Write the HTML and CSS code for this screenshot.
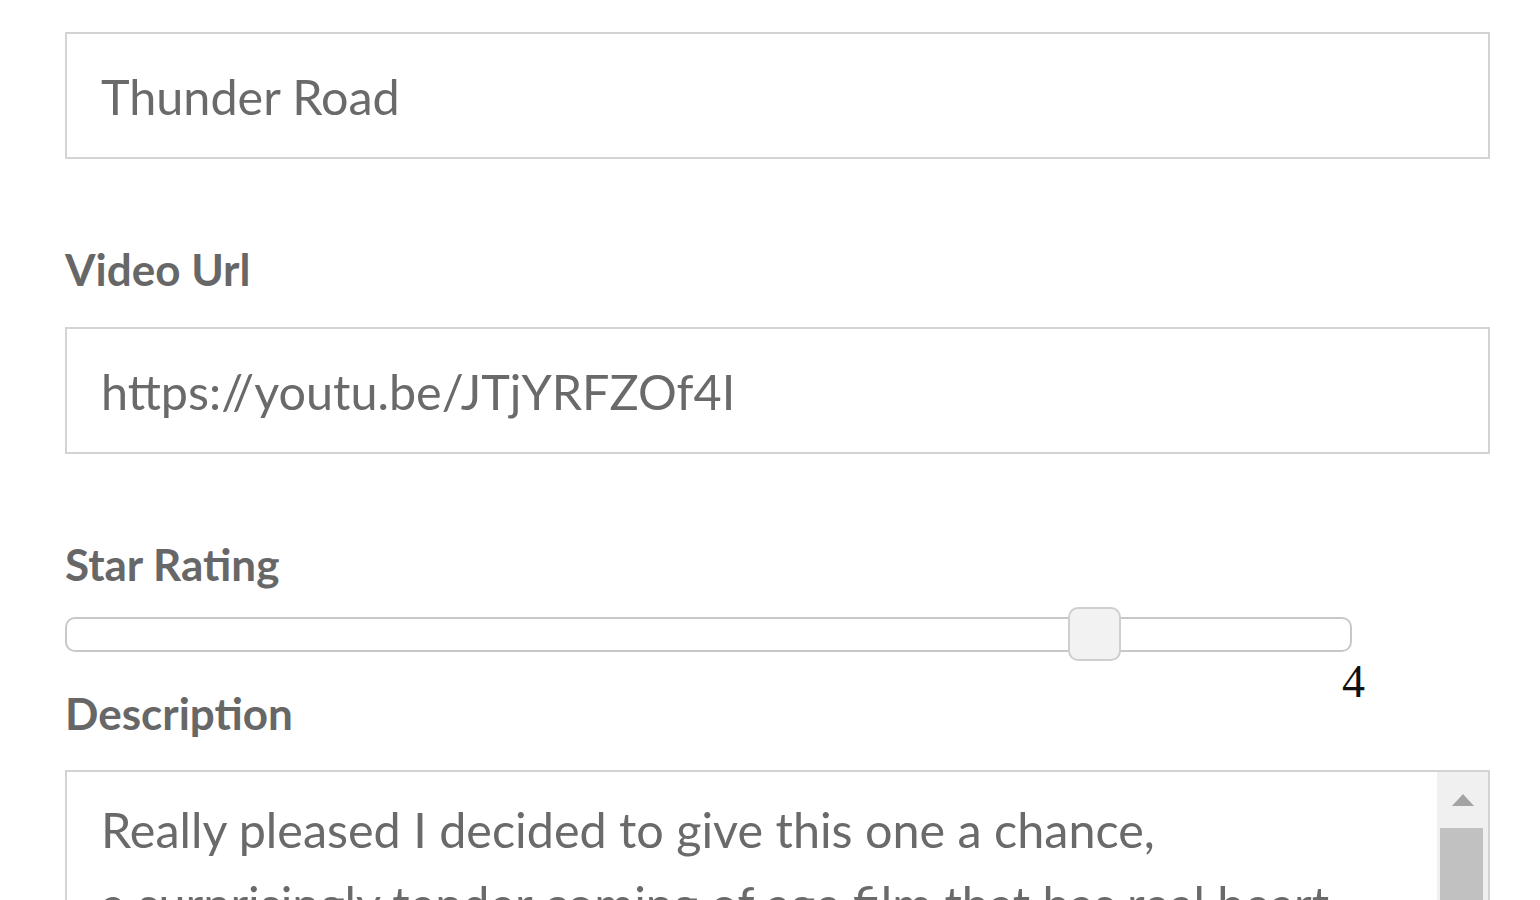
FILE: index.html
```html
<!DOCTYPE html>
<html lang="en">
<head>
  <meta charset="UTF-8">
  <title>Edit Review</title>
  <link rel="stylesheet" href="styles.css">
</head>
<body>
  <form class="review-form">
    <div class="field">
      <label for="title">Title</label>
      <input type="text" id="title" value="Thunder Road">
    </div>

    <div class="field">
      <label for="videoUrl">Video Url</label>
      <input type="text" id="videoUrl" value="https://youtu.be/JTjYRFZOf4I">
    </div>

    <div class="field rating-field">
      <label>Star Rating</label>
      <div class="slider">
        <span class="slider-handle" style="left: 78%"></span>
      </div>
      <div class="slider-value">4</div>
    </div>

    <div class="field desc-field">
      <label for="description">Description</label>
      <div class="textarea-wrap">
        <textarea id="description">Really pleased I decided to give this one a chance,
a surprisingly tender coming of age film that has real heart and a lot to say.</textarea>
        <div class="fake-scroll">
          <div class="scroll-up"><span class="arrow"></span></div>
          <div class="scroll-thumb"></div>
        </div>
      </div>
    </div>
  </form>
</body>
</html>
```

FILE: styles.css
```css
body {
  margin: 0;
  background: #ffffff;
  font-family: 'Lato', 'Liberation Sans', sans-serif;
  color: #666666;
  overflow: hidden;
}

.review-form {
  width: 1425px;
  margin: -52px 0 0 65px;
}

.field {
  margin-bottom: 84px;
}

label {
  display: block;
  font-size: 44px;
  line-height: 52px;
  font-weight: bold;
  color: #676767;
  margin-bottom: 32px;
}

input[type="text"], textarea {
  display: block;
  width: 100%;
  box-sizing: border-box;
  border: 2px solid #d3d3d3;
  background: #ffffff;
  font-family: 'Lato', 'Liberation Sans', sans-serif;
  font-size: 48.5px;
  color: #6a6a6a;
  outline: none;
}

input[type="text"] {
  height: 127px;
  padding: 0 34px;
}

/* star rating slider */
.rating-field label {
  margin-bottom: 27px;
}

.slider {
  position: relative;
  width: 1287px;
  height: 35px;
  box-sizing: border-box;
  border: 2px solid #c8c8c8;
  border-radius: 10px;
  background: #ffffff;
}

.slider-handle {
  position: absolute;
  top: -12px;
  width: 53px;
  height: 54px;
  box-sizing: border-box;
  border: 2px solid #cfcfcf;
  border-radius: 10px;
  background: #f2f2f2;
}

.slider-value {
  width: 1300px;
  text-align: right;
  font-family: 'Liberation Serif', serif;
  font-size: 46px;
  line-height: 46px;
  color: #111111;
  margin-top: 7px;
}

.rating-field {
  margin-bottom: -18px;
}

.desc-field label {
  margin-bottom: 31px;
}

.textarea-wrap {
  position: relative;
}

textarea {
  height: 300px;
  padding: 20px 90px 0 34px;
  line-height: 74px;
  resize: none;
  overflow: hidden;
}

.fake-scroll {
  position: absolute;
  top: 2px;
  right: 2px;
  width: 51px;
  bottom: 2px;
  background: #f0f0f0;
}

.scroll-up {
  height: 56px;
  display: flex;
  align-items: center;
  justify-content: center;
}

.arrow {
  width: 0;
  height: 0;
  border-left: 11px solid transparent;
  border-right: 11px solid transparent;
  border-bottom: 12px solid #a3a3a3;
}

.scroll-thumb {
  margin: 0 5px 0 3px;
  height: 200px;
  background: #c1c1c1;
}
```
